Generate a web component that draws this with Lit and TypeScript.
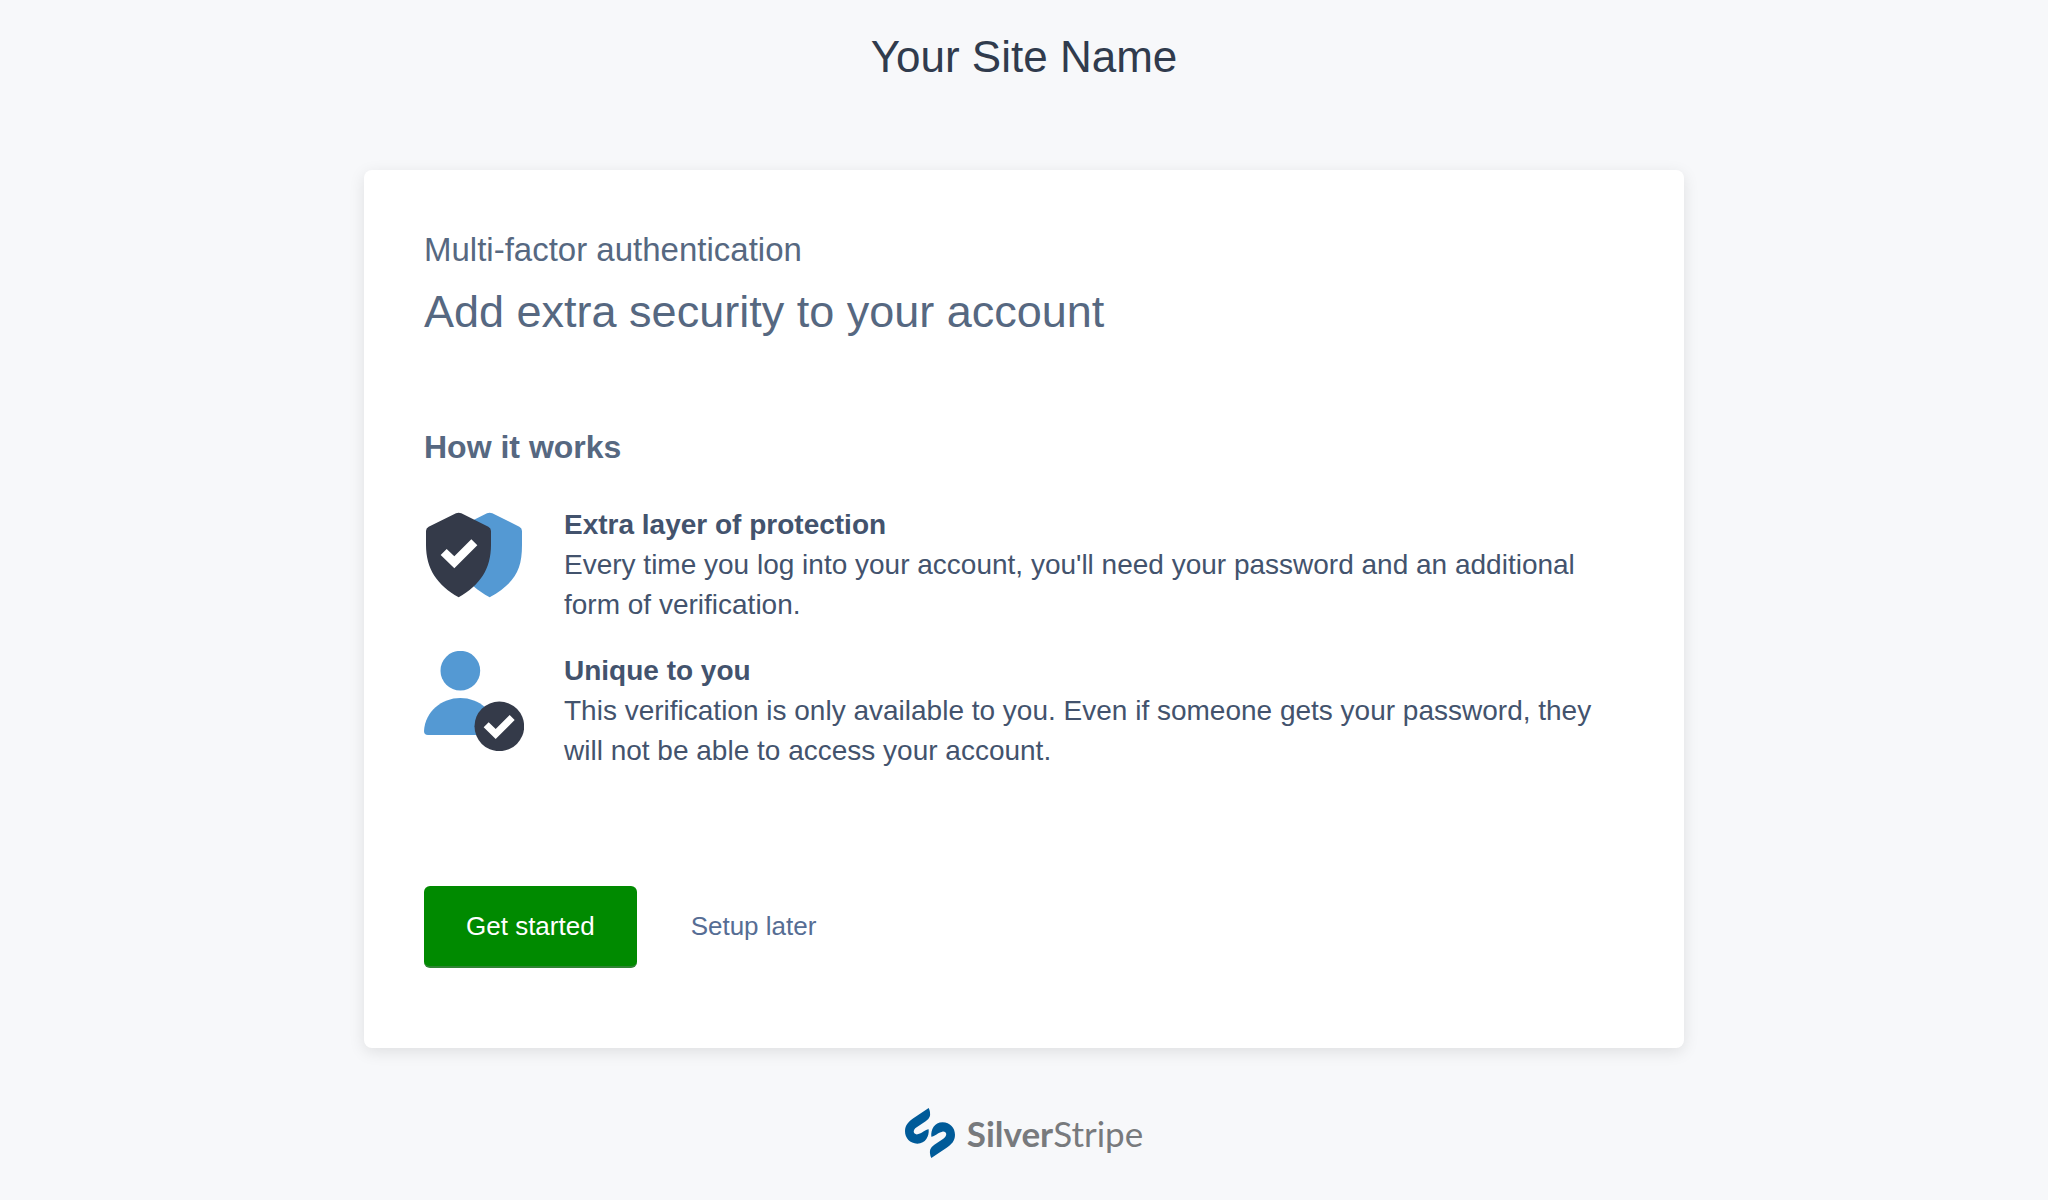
import { LitElement, html, css } from "lit";
import { customElement } from "lit/decorators.js";

const shieldIcon = html`<svg class="icon" viewBox="27 12 300 300" aria-hidden="true">
  <path fill="#5499d3" d="M216 37Q224 33 232 37L313 77Q321 81 321 90V132C321 210 298 246 224 289C150 246 127 210 127 132V90Q127 81 135 77Z"/>
  <path fill="#343a49" d="M123 37Q131 33 139 37L220 77Q228 81 228 90V132C228 203 196 252 131 289C66 252 33 203 33 132V90Q33 81 41 77Z"/>
  <path fill="#fff" d="M77 162L95 144L118 166L169 115L187 133L118 202Z"/>
</svg>`;

const userIcon = html`<svg class="icon" viewBox="27 450 300 300" aria-hidden="true">
  <circle cx="136" cy="509" r="59.500" fill="#5499d3"/>
  <path fill="#5499d3" d="M39 702Q27 702 27 690C30 632 80 591 136 591C192 591 242 632 245 690Q245 702 233 702Z"/>
  <circle cx="253" cy="676" r="74.500" fill="#343a49"/>
  <path fill="#fff" d="M206 679L221 664L242 684L284 642L299 657L242 714Z"/>
</svg>`;

@customElement("app-root")
export class AppRoot extends LitElement {
  static styles = css`
    :host {
      display: flex;
      flex-direction: column;
      align-items: center;
      box-sizing: border-box;
      min-height: 100vh;
      padding: 0 40px 40px;
      background: #f7f8fa;
      color: #43536d;
      font-family: "Helvetica Neue", Helvetica, "Liberation Sans", Arial, sans-serif;
      font-size: 28px;
      line-height: 40px;
    }
    h1, h2, h3, h4, p { margin: 0; font-weight: 400; }
    .site { padding: 29px 0 85px; color: #303b4d; font-size: 44px; line-height: 56px; }
    .card {
      box-sizing: border-box;
      width: 100%;
      max-width: 1320px;
      padding: 60px 60px 80px;
      border-radius: 8px;
      background: #fff;
      box-shadow: 0 4px 16px rgba(0, 0, 0, 0.1);
    }
    .eyebrow { color: #566881; font-size: 33px; line-height: 40px; }
    .title { padding-top: 14px; color: #566881; font-size: 45px; line-height: 56px; }
    .how { padding: 87px 0 38px; color: #566881; font-size: 32px; line-height: 40px; font-weight: 700; }
    .features { display: grid; gap: 26px; }
    .feature { display: flex; gap: 40px; }
    .feature h4 { font-size: 28px; font-weight: 700; }
    .icon { flex: none; width: 100px; height: 100px; }
    .actions { display: flex; gap: 12px; padding-top: 115px; }
    button {
      padding: 20px 42px;
      border: 0;
      border-bottom: 2px solid transparent;
      border-radius: 6px;
      background: none;
      color: #566d94;
      font: inherit;
      font-size: 26px;
      cursor: pointer;
    }
    .primary { border-color: #2f8433; background: #008a00; color: #fff; }
    .brand { display: flex; align-items: center; gap: 12px; padding-top: 60px; color: #787a7d; font-family: Lato, sans-serif; font-size: 35px; }
    .brand svg { width: 50px; height: 50px; }
  `;

  render() {
    return html`
      <h1 class="site">Your Site Name</h1>
      <main class="card">
        <h2 class="eyebrow">Multi-factor authentication</h2>
        <p class="title">Add extra security to your account</p>
        <h3 class="how">How it works</h3>
        <div class="features">
          <section class="feature">
            ${shieldIcon}
            <div>
              <h4>Extra layer of protection</h4>
              <p>Every time you log into your account, you'll need your password and an additional form of verification.</p>
            </div>
          </section>
          <section class="feature">
            ${userIcon}
            <div>
              <h4>Unique to you</h4>
              <p>This verification is only available to you. Even if someone gets your password, they will not be able to access your account.</p>
            </div>
          </section>
        </div>
        <div class="actions">
          <button class="primary" type="button">Get started</button>
          <button type="button">Setup later</button>
        </div>
      </main>
      <footer class="brand">
        <svg viewBox="27 24 150 150" aria-hidden="true">
          <path fill="#005b99" d="M98 24Q105 38 101 50Q98 58 89 64L62 82C48 91 52 105 65 103C77 101 88 89 98 88C100 109 89 131 64 131C42 131 27 114 27 94C27 75 38 65 52 55Z"/>
          <path fill="#005b99" d="M106 174Q99 160 103 148Q106 140 115 134L142 116C156 107 152 93 139 95C127 97 116 109 106 110C104 89 115 67 140 67C162 67 177 84 177 104C177 123 166 133 152 143Z"/>
        </svg>
        <span><b>Silver</b>Stripe</span>
      </footer>
    `;
  }
}
